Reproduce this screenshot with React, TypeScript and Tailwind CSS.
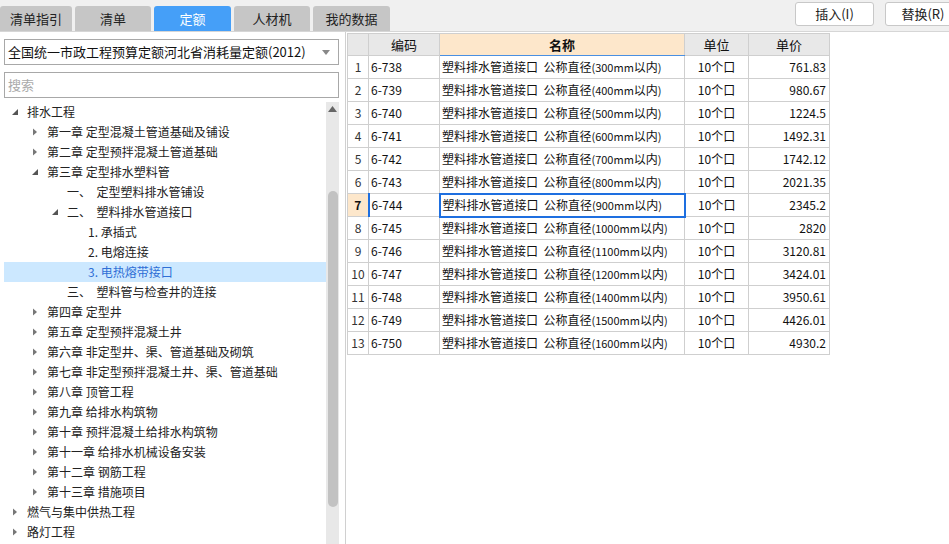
import React from 'react';

type Node = {
  level: number;
  text: string;
  arrow?: 'open' | 'closed';
  selected?: boolean;
};

const treeRows: Node[] = [
  { level: 0, text: '排水工程', arrow: 'open' },
  { level: 1, text: '第一章 定型混凝土管道基础及铺设', arrow: 'closed' },
  { level: 1, text: '第二章 定型预拌混凝土管道基础', arrow: 'closed' },
  { level: 1, text: '第三章 定型排水塑料管', arrow: 'open' },
  { level: 2, text: '一、\u00a0 定型塑料排水管铺设' },
  { level: 2, text: '二、\u00a0 塑料排水管道接口', arrow: 'open' },
  { level: 3, text: '1. 承插式' },
  { level: 3, text: '2. 电熔连接' },
  { level: 3, text: '3. 电热熔带接口', selected: true },
  { level: 2, text: '三、\u00a0 塑料管与检查井的连接' },
  { level: 1, text: '第四章 定型井', arrow: 'closed' },
  { level: 1, text: '第五章 定型预拌混凝土井', arrow: 'closed' },
  { level: 1, text: '第六章 非定型井、渠、管道基础及砌筑', arrow: 'closed' },
  { level: 1, text: '第七章 非定型预拌混凝土井、渠、管道基础', arrow: 'closed' },
  { level: 1, text: '第八章 顶管工程', arrow: 'closed' },
  { level: 1, text: '第九章 给排水构筑物', arrow: 'closed' },
  { level: 1, text: '第十章 预拌混凝土给排水构筑物', arrow: 'closed' },
  { level: 1, text: '第十一章 给排水机械设备安装', arrow: 'closed' },
  { level: 1, text: '第十二章 钢筋工程', arrow: 'closed' },
  { level: 1, text: '第十三章 措施项目', arrow: 'closed' },
  { level: 0, text: '燃气与集中供热工程', arrow: 'closed' },
  { level: 0, text: '路灯工程', arrow: 'closed' },
];

const items = [
  ['6-738', '300', '761.83'],
  ['6-739', '400', '980.67'],
  ['6-740', '500', '1224.5'],
  ['6-741', '600', '1492.31'],
  ['6-742', '700', '1742.12'],
  ['6-743', '800', '2021.35'],
  ['6-744', '900', '2345.2'],
  ['6-745', '1000', '2820'],
  ['6-746', '1100', '3120.81'],
  ['6-747', '1200', '3424.01'],
  ['6-748', '1400', '3950.61'],
  ['6-749', '1500', '4426.01'],
  ['6-750', '1600', '4930.2'],
];

const tabs = [
  { label: '清单指引', w: 'w-[72px]' },
  { label: '清单', w: 'w-[76px]' },
  { label: '定额', w: 'w-[77px]', active: true },
  { label: '人材机', w: 'w-[76px]' },
  { label: '我的数据', w: 'w-[77px]' },
];

const font = { fontFamily: '"Noto Sans CJK SC", "Noto Sans", sans-serif' };

const Arrow = ({ kind }: { kind: 'open' | 'closed' }) =>
  kind === 'open' ? (
    <svg width="8" height="8" viewBox="0 0 8 8">
      <polygon points="7,1 7,7 1,7" fill="#555" />
    </svg>
  ) : (
    <svg width="8" height="8" viewBox="0 0 8 8">
      <polygon points="2,0.5 6,4 2,7.5" fill="#777" />
    </svg>
  );

const TreeRow = ({ node }: { node: Node }) => {
  const pad = ['pl-[23px]', 'pl-[43px]', 'pl-[63px]', 'pl-[84px]'][node.level];
  return (
    <div
      className={`relative h-[20px] flex items-center text-[12px] whitespace-nowrap ${pad} ${
        node.selected ? 'bg-[#cce8ff] text-[#2f6fd6]' : 'text-[#222]'
      }`}
    >
      {node.arrow && (
        <span className="absolute top-[6px]" style={{ left: 7 + node.level * 20 }}>
          <Arrow kind={node.arrow} />
        </span>
      )}
      <span>{node.text}</span>
    </div>
  );
};

export default function App() {
  return (
    <div className="w-[949px] h-[544px] overflow-hidden flex flex-col bg-white" style={font}>
      <div className="h-[32px] shrink-0 bg-[#f0f0f0] border-b border-[#d6d6d6] flex justify-between">
        <div className="flex items-end gap-[3px]">
          {tabs.map((t) => (
            <div
              key={t.label}
              className={`${t.w} h-[25px] rounded-t-[3px] flex items-center justify-center text-[13px] ${
                t.active ? 'bg-[#459ff8] text-white' : 'bg-[#c6c6c6] text-[#222]'
              }`}
            >
              {t.label}
            </div>
          ))}
        </div>
        <div className="flex items-start gap-[11px] pt-[2px] -mr-[12px]">
          <button className="w-[79px] h-[24px] bg-white border border-[#c8c8c8] rounded-[3px] text-[13px] text-[#222]">
            插入(I)
          </button>
          <button className="w-[76px] h-[24px] bg-white border border-[#c8c8c8] rounded-[3px] text-[13px] text-[#222]">
            替换(R)
          </button>
        </div>
      </div>

      <div className="flex flex-1 min-h-0">
        <div className="w-[346px] shrink-0 border-r border-[#d0d0d0] flex flex-col pt-[7px] pl-[4px] pr-[6px]">
          <div className="h-[26px] border border-[#a8a8a8] flex items-center justify-between pl-[3px] pr-[8px] text-[13px] text-[#111]">
            <span>全国统一市政工程预算定额河北省消耗量定额(2012)</span>
            <svg width="8" height="5" viewBox="0 0 8 5">
              <polygon points="0,0 8,0 4,5" fill="#888" />
            </svg>
          </div>
          <div className="h-[26px] mt-[7px] border border-[#a8a8a8] flex items-center pl-[3px] text-[13px] text-[#aaa]">
            搜索
          </div>
          <div className="flex flex-1 min-h-0 mt-[4px]">
            <div className="flex-1 overflow-hidden">
              {treeRows.map((n, i) => (
                <TreeRow key={i} node={n} />
              ))}
            </div>
            <div className="w-[13px] bg-[#e8e8e8] flex flex-col items-center">
              <svg width="9" height="6" viewBox="0 0 9 6" className="mt-[4px]">
                <polygon points="0,6 9,6 4.5,0" fill="#666" />
              </svg>
              <div className="w-[10px] h-[316px] mt-[79px] rounded-[5px] bg-[#c2c2c2]" />
            </div>
          </div>
        </div>

        <div className="flex-1 pl-px">
          <table className="border-collapse text-[12px] text-[#111] table-fixed mt-px">
            <colgroup>
              <col className="w-[21px]" />
              <col className="w-[71px]" />
              <col className="w-[245px]" />
              <col className="w-[64px]" />
              <col className="w-[81px]" />
            </colgroup>
            <thead>
              <tr className="h-[22px]">
                <th className="border border-[#cfcfcf] bg-[#e8e8e8]" />
                <th className="border border-[#cfcfcf] bg-[#e8e8e8] font-normal text-[13px]">编码</th>
                <th className="border border-[#cfcfcf] border-b-[#4a90e2] bg-[#fde7cb] font-bold text-[13px]">名称</th>
                <th className="border border-[#cfcfcf] bg-[#e8e8e8] font-normal text-[13px]">单位</th>
                <th className="border border-[#cfcfcf] bg-[#e8e8e8] font-normal text-[13px]">单价</th>
              </tr>
            </thead>
            <tbody>
              {items.map((r, i) => {
                const sel = i === 6;
                return (
                  <tr key={r[0]} className="h-[23px]">
                    <td
                      className={`border border-[#cfcfcf] text-center text-[12px] ${
                        sel ? 'bg-[#fde7cb] font-bold' : 'text-[#333]'
                      }`}
                    >
                      {i + 1}
                    </td>
                    <td
                      className={`border border-[#cfcfcf] pl-[2px] ${sel ? 'border-l-2 border-l-[#1e6fe0]' : ''}`}
                    >
                      {r[0]}
                    </td>
                    <td
                      className={`border pl-[2px] whitespace-nowrap ${
                        sel ? 'border-2 border-[#1e6fe0]' : 'border-[#cfcfcf]'
                      }`}
                    >
                      塑料排水管道接口{'\u00a0\u00a0'}公称直径
                      <span className="text-[11px]">({r[1]}mm</span>以内<span className="text-[11px]">)</span>
                    </td>
                    <td className="border border-[#cfcfcf] text-center">10个口</td>
                    <td className="border border-[#cfcfcf] text-right pr-[3px]">{r[2]}</td>
                  </tr>
                );
              })}
            </tbody>
          </table>
        </div>
      </div>
    </div>
  );
}
